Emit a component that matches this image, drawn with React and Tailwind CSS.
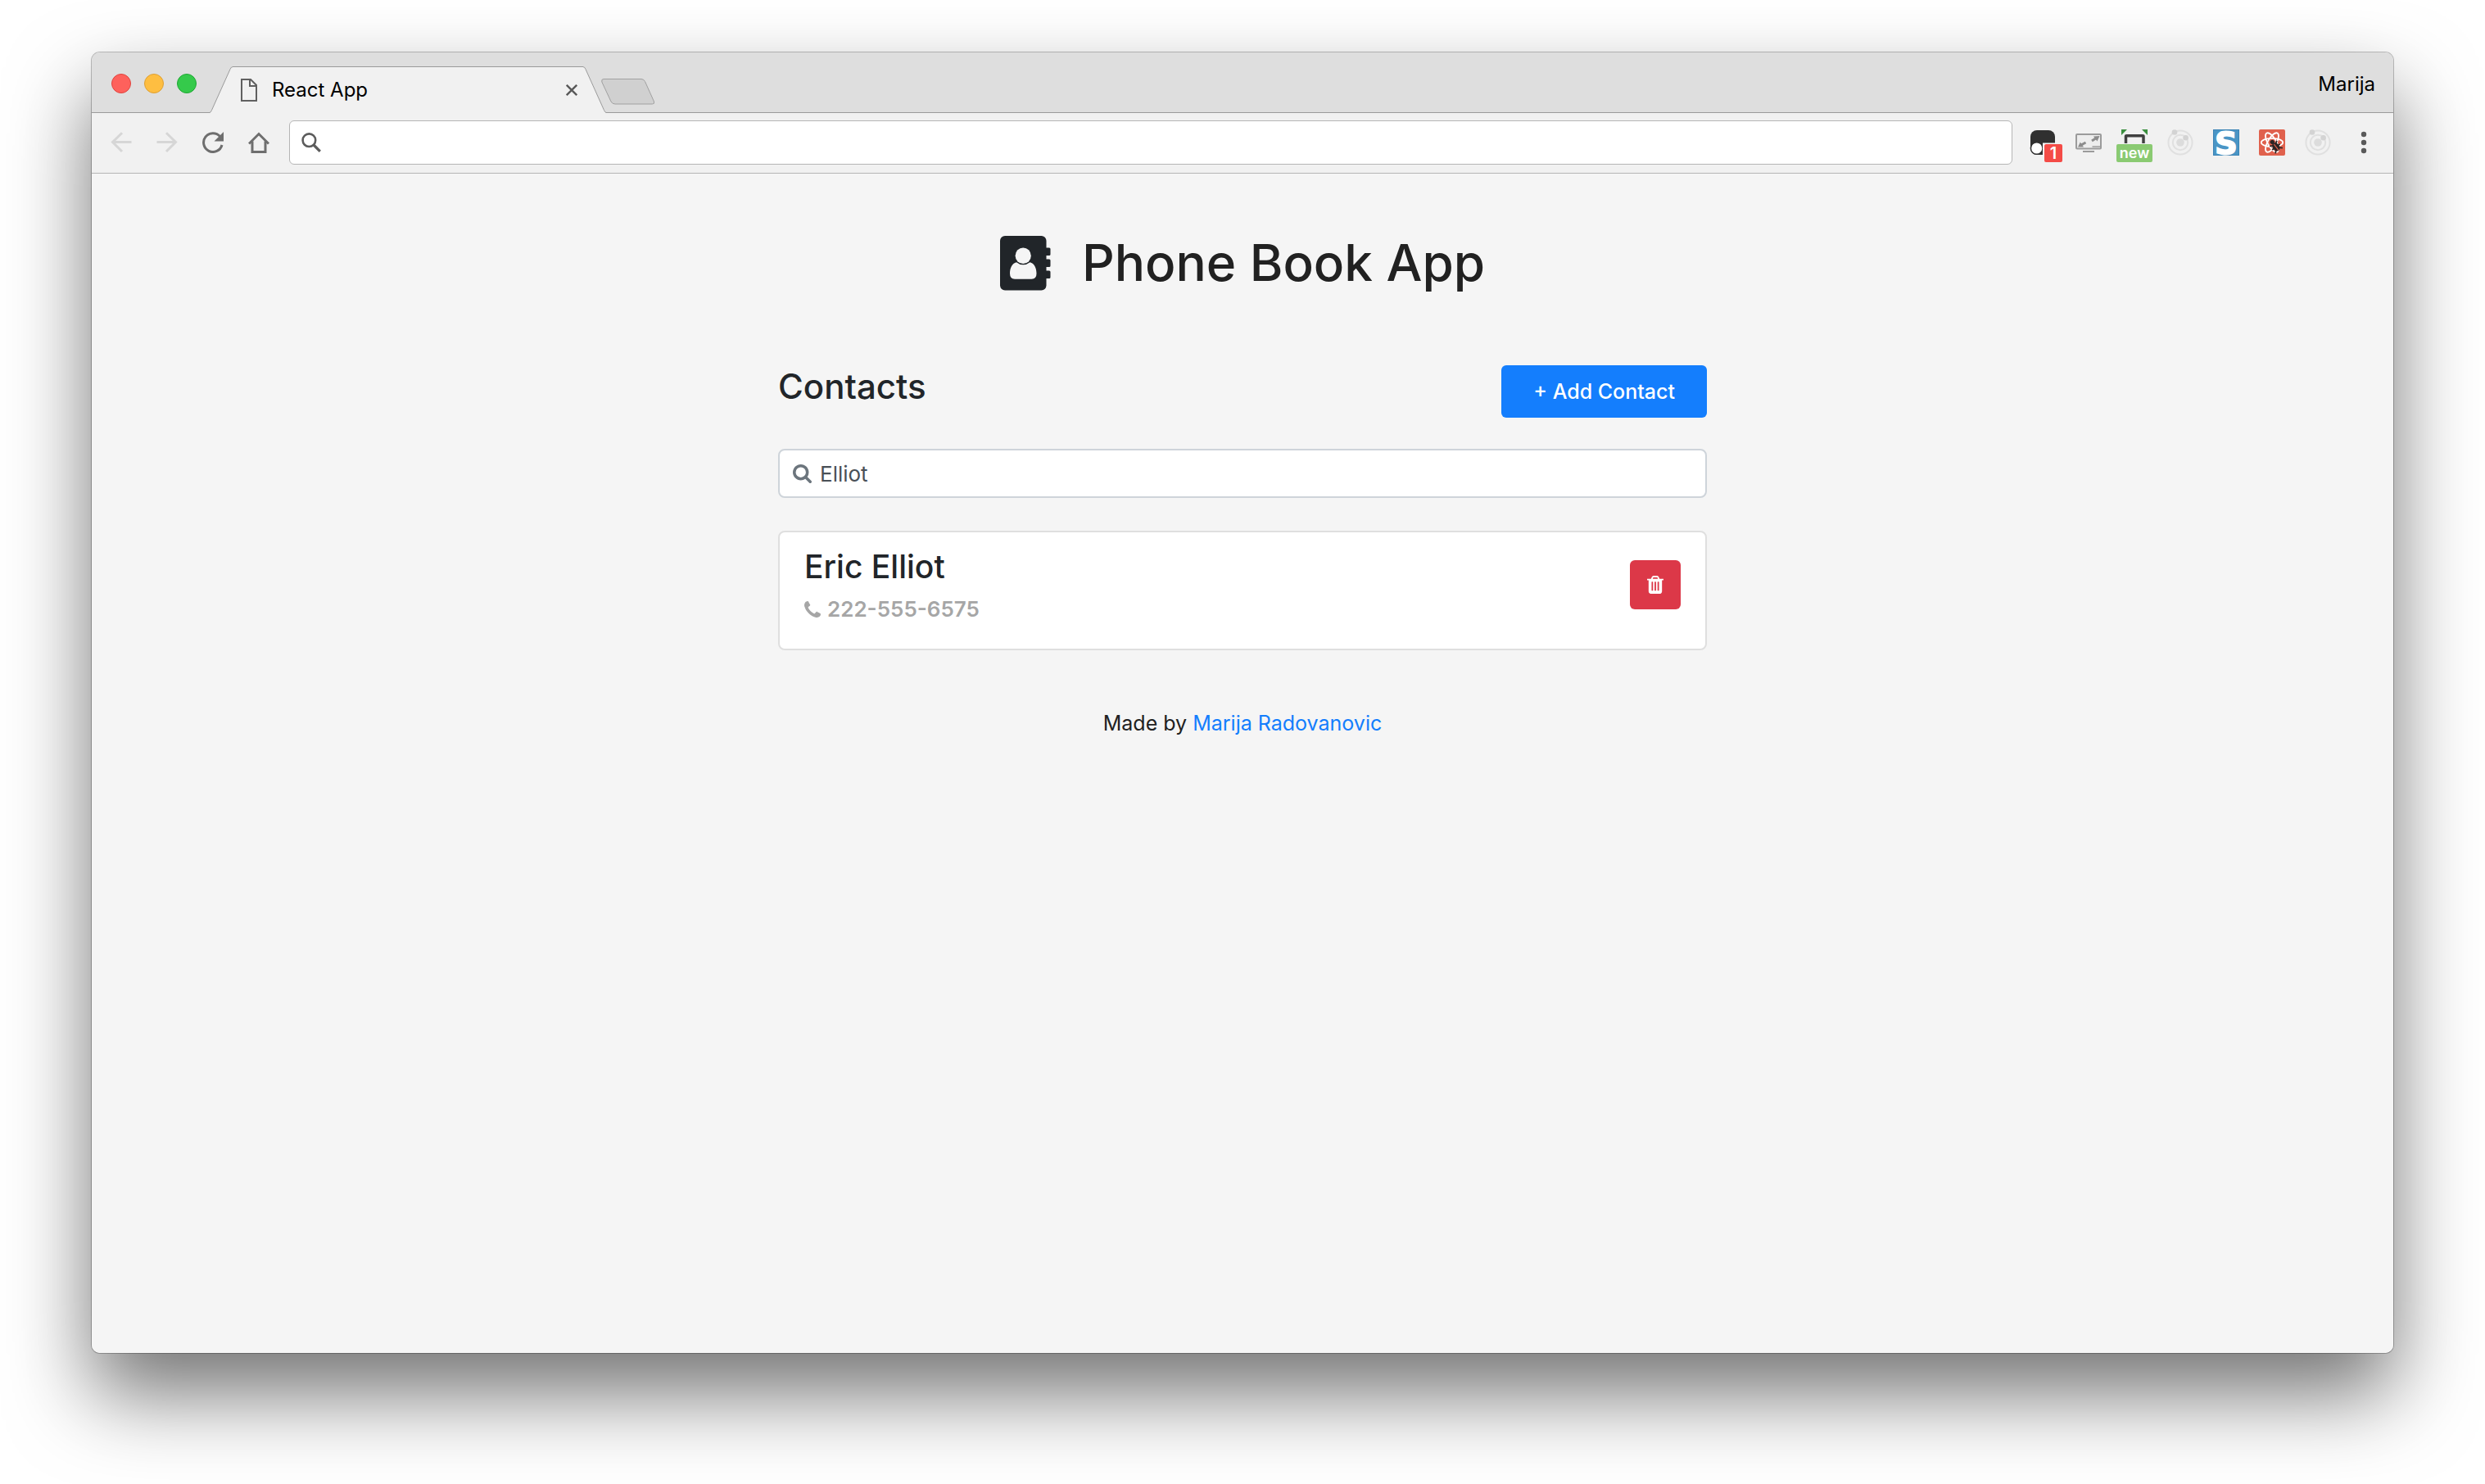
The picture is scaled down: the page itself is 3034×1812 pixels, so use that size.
import React, { useState } from "react";

function TrafficLights() {
  return (
    <div className="mt-0.5 ml-6 flex gap-4 self-center">
      <button type="button" aria-label="Close window" className="size-6 rounded-full border border-[#e0443e] bg-[#fe615c]" />
      <button type="button" aria-label="Minimize window" className="size-6 rounded-full border border-[#dea033] bg-[#febe41]" />
      <button type="button" aria-label="Zoom window" className="size-6 rounded-full border border-[#1fa834] bg-[#35ca4b]" />
    </div>
  );
}

function TabStrip() {
  return (
    <div className="flex h-[74px] items-end bg-[#dedede] shadow-[inset_0_-1px_0_#9a9a9a]">
      <TrafficLights />
      <div className="ml-4 flex h-[57px] w-[484px]">
        <svg aria-hidden="true" viewBox="0 0 28 57" className="h-full w-7 shrink-0">
          <path d="M0 56.5Q1.500 56 2.500 53.500L25 3.500Q26 .5 28.500 .5V57H0Z" fill="#f1f1f1" />
          <path d="M0 56.500Q1.500 56 2.500 53.500L25 3.500Q26 .5 28.500 .5" fill="none" stroke="#9a9a9a" strokeWidth="1" />
        </svg>
        <div className="flex min-w-0 flex-1 items-center border-t border-[#9a9a9a] bg-[#f1f1f1] pl-2.5">
          <svg aria-hidden="true" viewBox="0 0 20 28" className="h-7 w-5 shrink-0" fill="none" stroke="#606060" strokeWidth="2">
            <path d="M1 1H12L19 8V27H1Z" />
            <path d="M11 1V9H19" />
          </svg>
          <span className="ml-[18px] flex-1 truncate text-2xl text-black">React App</span>
          <button type="button" aria-label="Close tab" className="flex h-8 w-7 items-center justify-center">
            <svg aria-hidden="true" viewBox="0 0 14 14" className="size-3.5" fill="none" stroke="#5a5a5a" strokeWidth="2.400">
              <path d="M.8 .8L13.200 13.200M13.200 .8L.8 13.200" />
            </svg>
          </button>
        </div>
        <svg aria-hidden="true" viewBox="0 0 28 57" className="h-full w-7 shrink-0">
          <path d="M28 56.500Q26.500 56 25.500 53.500L3 3.500Q2 .5 -.5 .5V57H28Z" fill="#f1f1f1" />
          <path d="M28 56.500Q26.500 56 25.500 53.500L3 3.500Q2 .5 -.5 .5" fill="none" stroke="#9a9a9a" strokeWidth="1" />
        </svg>
      </div>
      <button type="button" aria-label="New tab" className="mb-2.5 -ml-1.5">
        <svg aria-hidden="true" viewBox="0 0 66 32" className="h-8 w-[66px]">
          <path
            d="M3 .5H49Q52 .5 53.500 3.500L64.500 28Q65.500 31 62.500 31H17Q13.500 31 12 28L.8 4Q0 .5 3 .5Z"
            fill="#d0d0d0"
            stroke="#a0a0a0"
          />
        </svg>
      </button>
      <button type="button" className="mt-1 mr-[22px] ml-auto self-center text-2xl text-black">
        Marija
      </button>
    </div>
  );
}

function NavButton({ label, color, children }) {
  return (
    <button type="button" aria-label={label} className={"flex h-14 w-14 items-center justify-center " + color}>
      <svg aria-hidden="true" viewBox="0 0 26 26" className="size-6.5" fill="none" stroke="currentColor" strokeWidth="3">
        {children}
      </svg>
    </button>
  );
}

function Extension({ label, badge, badgeClass, children }) {
  return (
    <button type="button" aria-label={label} className="relative h-[54px] w-14">
      <svg aria-hidden="true" viewBox="0 0 56 54" className="h-[54px] w-14">
        {children}
      </svg>
      {badge && (
        <span className={"absolute top-[29px] flex h-[22px] items-center justify-center rounded-xs text-white " + badgeClass}>{badge}</span>
      )}
    </button>
  );
}

function Orbit() {
  return (
    <g fill="none" stroke="#e0e0e0" strokeWidth="2">
      <circle cx="28" cy="27" r="14.600" />
      <circle cx="28" cy="27" r="9.200" />
      <circle cx="28" cy="27" r="4.800" fill="#dcdcdc" stroke="none" />
      <circle cx="21" cy="14.500" r="3.300" fill="#d3d3d3" stroke="none" />
      <circle cx="34.600" cy="21.300" r="3.300" fill="#d3d3d3" stroke="none" />
    </g>
  );
}

function Extensions() {
  return (
    <div className="flex">
      <Extension label="Script manager, 1 active" badge="1" badgeClass="left-[30px] w-[22px] bg-[#f44b46] text-xl font-semibold">
        <rect x="13" y="12" width="30" height="30" rx="8" fill="#303030" />
        <circle cx="20.700" cy="34" r="7.300" fill="#fff" stroke="#303030" strokeWidth="1.500" />
        <rect x="28" y="27.500" width="16" height="16" fill="#f8f8f8" />
      </Extension>
      <Extension label="Window resizer">
        <g fill="none" stroke="#9b9b9b" strokeWidth="2">
          <rect x="13" y="17" width="30" height="17.500" rx="1" fill="#ededed" />
          <path d="M21 38H35" />
          <path d="M32.500 32H42.500" strokeWidth="1.500" />
          <path d="M24.500 27L19 30M32 25L37.500 21.500" strokeWidth="3" stroke="#8c8c8c" />
          <path d="M15 32.500L17.800 26.500L22 32.500ZM41.500 19L34 19.500L38.500 25.500Z" fill="#8c8c8c" stroke="none" />
        </g>
      </Extension>
      <Extension label="Page capture, new" badge="new" badgeClass="left-1.5 w-11 bg-[#8aca72] text-lg font-semibold">
        <path d="M12 11H19L12 18ZM44 11H37L44 18Z" fill="#3b8f3f" />
        <path d="M17.500 28V19.500Q17.500 18.800 18.500 18.800H38Q39 18.800 39 19.500V28" fill="none" stroke="#404040" strokeWidth="3.500" />
      </Extension>
      <Extension label="Orbit">
        <Orbit />
      </Extension>
      <Extension label="Stylus">
        <rect x="12" y="11" width="32" height="32" fill="#4a95c5" />
        <rect x="12.500" y="11.500" width="31" height="31" fill="none" stroke="#3a83b5" />
        <text
          x="28"
          y="41"
          textAnchor="middle"
          fontSize="38"
          fill="#fff"
          stroke="#fff"
          strokeWidth="2"
          className="font-['DejaVu_Sans',sans-serif] font-bold"
        >
          S
        </text>
      </Extension>
      <Extension label="React developer tools">
        <rect x="12" y="11" width="32" height="32" rx="2" fill="#e0614d" />
        <g fill="none" stroke="#fff" strokeWidth="1.800">
          <ellipse cx="28" cy="27" rx="13.200" ry="5.200" />
          <ellipse cx="28" cy="27" rx="13.200" ry="5.200" transform="rotate(60 28 27)" />
          <ellipse cx="28" cy="27" rx="13.200" ry="5.200" transform="rotate(120 28 27)" />
        </g>
        <g transform="rotate(-38 31 30)">
          <circle cx="31" cy="25.500" r="2.600" fill="#2b2424" />
          <ellipse cx="31" cy="33" rx="4" ry="5.500" fill="#2b2424" />
          <path d="M25.500 27.500L29 30M36.500 27.500L33 30M25 33H37M25.500 39L29 35.500M36.500 39L33 35.500" stroke="#2b2424" strokeWidth="1.800" />
          <path d="M31 29V38" stroke="#e0614d" strokeWidth="1.200" />
        </g>
      </Extension>
      <Extension label="Orbit secondary">
        <Orbit />
      </Extension>
      <Extension label="Browser menu">
        <g fill="#5a5a5a">
          <circle cx="28" cy="17" r="3.200" />
          <circle cx="28" cy="27" r="3.200" />
          <circle cx="28" cy="37" r="3.200" />
        </g>
      </Extension>
    </div>
  );
}

function Toolbar() {
  return (
    <div className="flex h-[74px] items-center border-b border-[#b5b5b5] bg-[#f1f1f1] px-2 pb-0.5">
      <NavButton label="Back" color="text-[#d6d6d6]">
        <path d="M25.500 12.500H3M14 1.200L2.500 12.500L14 24" />
      </NavButton>
      <NavButton label="Forward" color="text-[#d6d6d6]">
        <path d="M.5 12.500H23M12 1.200L23.500 12.500L12 24" />
      </NavButton>
      <NavButton label="Reload" color="text-[#6e6e6e]">
        <path d="M21.500 5.500A11.400 11.400 0 1 0 24 16" />
        <path d="M26 0V11.500H14.500Z" fill="currentColor" stroke="none" />
      </NavButton>
      <NavButton label="Home" color="text-[#6e6e6e]">
        <path d="M1 14.500L13 2.500L25 14.500" />
        <path d="M5 11.500V24.500H21V11.500" />
      </NavButton>
      <label className="mx-[9px] flex h-[54px] min-w-0 flex-1 items-center rounded-md border border-[#b5b5b5] bg-white pl-3.5">
        <svg aria-hidden="true" viewBox="0 0 24 24" className="size-6 shrink-0" fill="none" stroke="#5c5c5c">
          <circle cx="9.400" cy="9.200" r="7.800" strokeWidth="2.600" />
          <path d="M15 15L22.800 22.800" strokeWidth="3.200" />
        </svg>
        <input type="text" aria-label="Address" className="min-w-0 flex-1 px-3 text-2xl outline-none" />
      </label>
      <Extensions />
    </div>
  );
}

function AddressBookIcon() {
  return (
    <svg aria-hidden="true" viewBox="0 0 62 67" className="h-[67px] w-[62px] shrink-0">
      <path d="M54 14.500H60Q61.500 14.500 61.500 16V22.500Q61.500 24 60 24H54ZM54 28.500H60Q61.500 28.500 61.500 30V36.500Q61.500 38 60 38H54ZM54 42.500H60Q61.500 42.500 61.500 44V50.500Q61.500 52 60 52H54Z" fill="#212529" />
      <rect x="0" y="0" width="56.500" height="66.500" rx="6" fill="#212529" />
      <ellipse cx="28.200" cy="24.200" rx="9.600" ry="9.800" fill="#f5f5f5" />
      <path d="M20 32.200Q23.800 35.300 28.200 35.300T36.500 32.200C42 33.500 44.500 39.500 44.500 46Q44.500 52.700 38.500 52.700H18Q12 52.700 12 46C12 39.500 14.500 33.500 20 32.200Z" fill="#f5f5f5" />
    </svg>
  );
}

function SearchIcon() {
  return (
    <svg aria-hidden="true" viewBox="64 128 1664 1664" className="size-[23px] shrink-0" fill="#6c757d">
      <path d="M1216 832q0-185-131.500-316.500t-316.500-131.500-316.500 131.500-131.500 316.500 131.500 316.500 316.500 131.500 316.500-131.500 131.500-316.500zm512 832q0 52-38 90t-90 38q-54 0-90-38l-343-342q-179 124-399 124-143 0-273.500-55.500t-225-150-150-225-55.500-273.500 55.500-273.500 150-225 225-150 273.500-55.500 273.500 55.500 225 150 150 225 55.500 273.500q0 220-124 399l343 343q37 37 37 90z" />
    </svg>
  );
}

function PhoneIcon() {
  return (
    <svg aria-hidden="true" viewBox="192 128 1408 1408" className="size-5 shrink-0" fill="currentColor">
      <path d="M1600 1240q0 27-10 70.500t-21 68.500q-21 50-122 106-94 51-186 51-27 0-52.500-3.500t-57.500-12.500-47.500-14.500-55.500-20.500-49-18q-98-35-175-83-128-79-264.500-215.500t-215.500-264.500q-48-77-83-175-3-9-18-49t-20.500-55.500-14.500-47.500-12.500-57.500-3.500-52.500q0-92 51-186 56-101 106-122 25-11 68.500-21t70.500-10q14 0 21 3 18 6 53 76 11 19 30 54t35 63.500 31 53.500q3 4 17.500 25t21.500 35.500 7 28.500q0 20-28.500 50t-62 55-62 53-28.500 46q0 9 5 22.500t8.500 20.500 14 24 11.500 19q76 137 174 235t235 174q2 1 19 11.500t24 14 20.500 8.500 22.500 5q18 0 46-28.500t53-62 55-62 50-28.500q14 0 28.500 7t35.500 21.500 25 17.500q25 15 53.500 31t63.500 35 54 30q70 35 76 53 3 7 3 21z" />
    </svg>
  );
}

function TrashIcon() {
  return (
    <svg aria-hidden="true" viewBox="192 128 1408 1536" className="h-[22px] w-5" fill="currentColor">
      <path d="M704 1376v-704q0-14-9-23t-23-9h-64q-14 0-23 9t-9 23v704q0 14 9 23t23 9h64q14 0 23-9t9-23zm256 0v-704q0-14-9-23t-23-9h-64q-14 0-23 9t-9 23v704q0 14 9 23t23 9h64q14 0 23-9t9-23zm256 0v-704q0-14-9-23t-23-9h-64q-14 0-23 9t-9 23v704q0 14 9 23t23 9h64q14 0 23-9t9-23zm-544-992h448l-48-117q-7-9-17-11h-317q-10 2-17 11zm928 32v64q0 14-9 23t-23 9h-96v948q0 83-47 143.500t-113 60.500h-832q-66 0-113-58.500t-47-141.500v-952h-96q-14 0-23-9t-9-23v-64q0-14 9-23t23-9h309l70-167q15-37 54-63t79-26h320q40 0 79 26t54 63l70 167h309q14 0 23 9t9 23z" />
    </svg>
  );
}

function ContactCard({ name, phone }) {
  return (
    <li className="flex items-start justify-between rounded-lg border-2 border-[#dfdfdf] bg-white px-[30px] pt-[18px] pb-[26px]">
      <div>
        <h3 className="text-[39px] leading-12 font-medium text-[#212529]">{name}</h3>
        <p className="mt-1.5 flex items-center gap-2 text-[26px] leading-11 font-semibold text-[#a6a6a6]">
          <PhoneIcon />
          {phone}
        </p>
      </div>
      <button type="button" aria-label={"Delete " + name} className="mt-4 flex h-15 w-[62px] items-center justify-center rounded-md bg-[#dc3848] text-white">
        <TrashIcon />
      </button>
    </li>
  );
}

function PhoneBook() {
  const [query, setQuery] = useState("Elliot");
  return (
    <main className="flex-1 bg-[#f5f5f5] px-8 pt-18">
      <header className="flex items-center justify-center gap-[38px]">
        <AddressBookIcon />
        <h1 className="text-[62px] leading-[74px] font-medium text-[#212121]">Phone Book App</h1>
      </header>
      <div className="mx-auto mt-22 max-w-[1134px]">
        <div className="flex items-start justify-between">
          <h2 className="text-[42px] leading-[52px] font-medium text-[#212529]">Contacts</h2>
          <button type="button" className="h-16 rounded-md bg-[#147efd] px-[39px] pt-0.5 text-[25px] font-medium text-white">
            + Add Contact
          </button>
        </div>
        <label className="mt-[38px] flex h-15 items-center gap-2.5 rounded-lg border-2 border-[#ced4da] bg-white pl-4">
          <SearchIcon />
          <input
            type="text"
            aria-label="Search contacts"
            value={query}
            onChange={(event) => setQuery(event.target.value)}
            className="min-w-0 flex-1 text-[26px] text-[#495057] outline-none"
          />
        </label>
        <ul className="mt-10">
          <ContactCard name="Eric Elliot" phone="222-555-6575" />
        </ul>
      </div>
      <footer className="mt-[69px] text-center text-[25px] leading-10 text-[#212121]">
        Made by{" "}
        <a href="#author" className="text-[#147efd]">
          Marija Radovanovic
        </a>
      </footer>
    </main>
  );
}

export default function App() {
  return (
    <div className="flex min-h-screen bg-white px-28 pt-16 pb-40 font-['Inter',sans-serif]">
      <div className="flex min-w-0 flex-1 flex-col overflow-hidden rounded-[10px] shadow-[0_0_0_1px_rgba(0,0,0,0.25),0_50px_100px_rgba(0,0,0,0.55)]">
        <TabStrip />
        <Toolbar />
        <PhoneBook />
      </div>
    </div>
  );
}
